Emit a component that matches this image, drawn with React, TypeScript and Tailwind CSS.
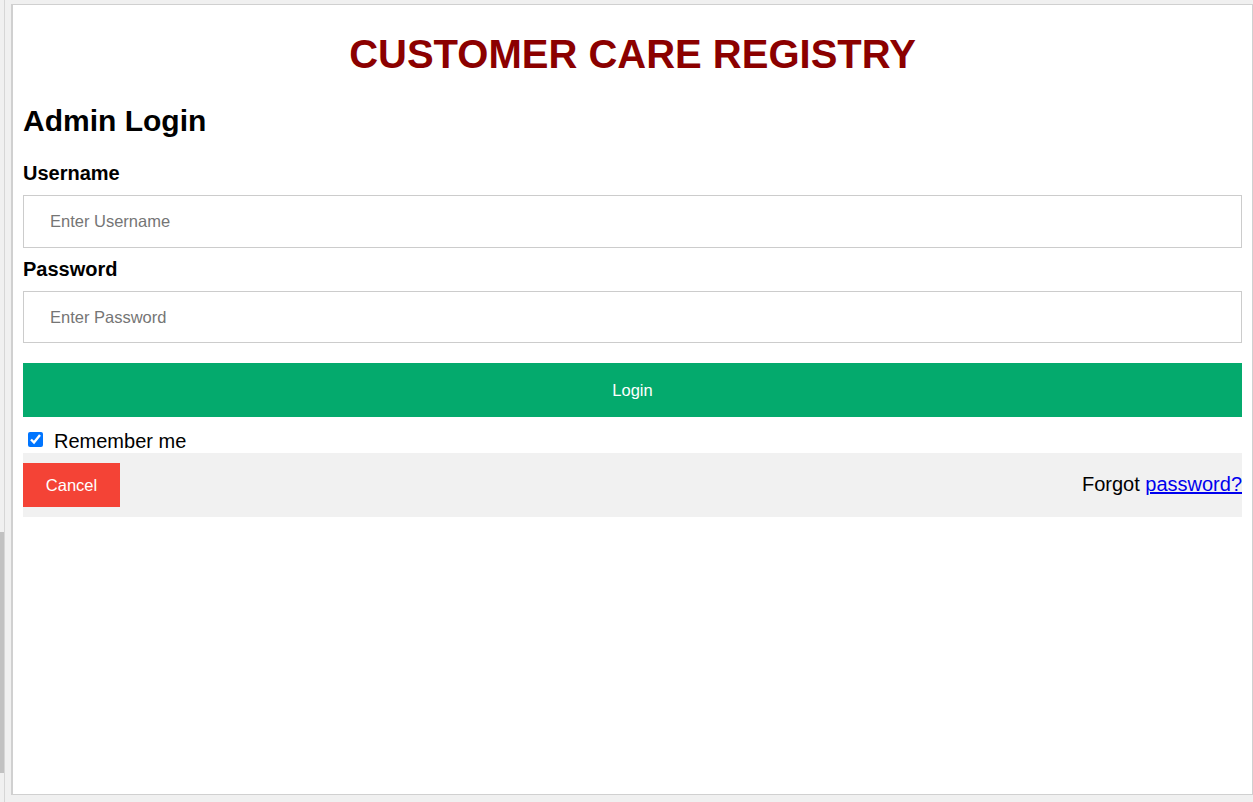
import React from "react";

export default function App() {
  return (
    <div className="h-[802px] w-full bg-[#f0f0f0] flex overflow-hidden" style={{ fontFamily: '"Liberation Sans", Arial, sans-serif' }}>
      <div className="w-[4px] h-full flex flex-col">
        <div className="h-[532px]" />
        <div className="h-[241px] bg-[#c1c1c1]" />
      </div>
      <div className="w-[1px] h-full bg-[#d6d6d6]" />
      <div className="w-[6px] h-full" />
      <div className="flex-1 flex flex-col">
        <div className="h-[4px]" />
        <div className="h-[791px] bg-white border-l-2 border-t border-r border-b border-[#d0d0d0] px-[10px] text-black">
          <h1 className="text-center font-bold text-[40px] leading-[46px] text-[#8b0000] mt-[26px]">CUSTOMER CARE REGISTRY</h1>
          <h2 className="font-bold text-[30px] leading-[34px] mt-[27px]">Admin Login</h2>
          <label className="block font-bold text-[20px] leading-[23px] mt-[24px]">Username</label>
          <input
            type="text"
            placeholder="Enter Username"
            className="block w-full h-[53px] mt-[10px] border border-[#cccccc] px-[26px] text-[16.5px] placeholder:text-[#757575] outline-none"
          />
          <label className="block font-bold text-[20px] leading-[23px] mt-[10px]">Password</label>
          <input
            type="password"
            placeholder="Enter Password"
            className="block w-full h-[52px] mt-[10px] border border-[#cccccc] px-[26px] text-[16.5px] placeholder:text-[#757575] outline-none"
          />
          <button className="block w-full h-[54px] mt-[20px] bg-[#04aa6d] text-white text-[16.5px]">Login</button>
          <div className="flex items-start h-[36px]">
            <input type="checkbox" defaultChecked className="w-[15px] h-[15px] ml-[5px] mr-[11px] mt-[15px] accent-[#0075ff]" />
            <span className="text-[20px] leading-[23px] mt-[13px]">Remember me</span>
          </div>
          <div className="bg-[#f1f1f1] h-[64px] flex items-center justify-between">
            <button className="w-[97px] h-[44px] bg-[#f44336] text-white text-[16.5px]">Cancel</button>
            <span className="text-[20px] mb-[2px]">
              Forgot <a href="#" className="text-[#0000ee] underline">password?</a>
            </span>
          </div>
        </div>
      </div>
    </div>
  );
}
